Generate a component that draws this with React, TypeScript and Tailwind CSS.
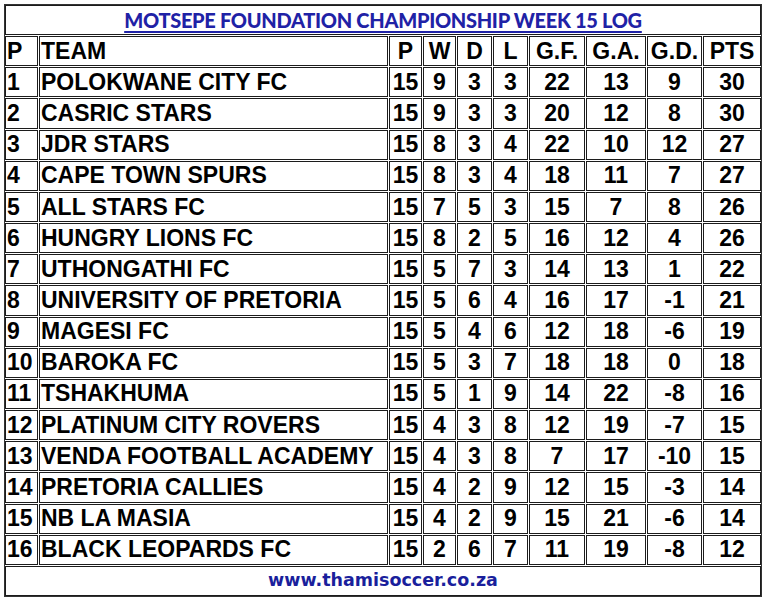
import React from "react";

type Row = [number, string, number, number, number, number, number, number, number, number];

const rows: Row[] = [
    [1, "POLOKWANE CITY FC", 15, 9, 3, 3, 22, 13, 9, 30],
    [2, "CASRIC STARS", 15, 9, 3, 3, 20, 12, 8, 30],
    [3, "JDR STARS", 15, 8, 3, 4, 22, 10, 12, 27],
    [4, "CAPE TOWN SPURS", 15, 8, 3, 4, 18, 11, 7, 27],
    [5, "ALL STARS FC", 15, 7, 5, 3, 15, 7, 8, 26],
    [6, "HUNGRY LIONS FC", 15, 8, 2, 5, 16, 12, 4, 26],
    [7, "UTHONGATHI FC", 15, 5, 7, 3, 14, 13, 1, 22],
    [8, "UNIVERSITY OF PRETORIA", 15, 5, 6, 4, 16, 17, -1, 21],
    [9, "MAGESI FC", 15, 5, 4, 6, 12, 18, -6, 19],
    [10, "BAROKA FC", 15, 5, 3, 7, 18, 18, 0, 18],
    [11, "TSHAKHUMA", 15, 5, 1, 9, 14, 22, -8, 16],
    [12, "PLATINUM CITY ROVERS", 15, 4, 3, 8, 12, 19, -7, 15],
    [13, "VENDA FOOTBALL ACADEMY", 15, 4, 3, 8, 7, 17, -10, 15],
    [14, "PRETORIA CALLIES", 15, 4, 2, 9, 12, 15, -3, 14],
    [15, "NB LA MASIA", 15, 4, 2, 9, 15, 21, -6, 14],
    [16, "BLACK LEOPARDS FC", 15, 2, 6, 7, 11, 19, -8, 12],
];

const headers = ["P", "TEAM", "P", "W", "D", "L", "G.F.", "G.A.", "G.D.", "PTS"];

const cell = "border border-[#1c1c1c] flex items-center leading-none";

export default function App() {
    return (
        <main className="w-[766px] h-[601px] bg-white p-[4px]">
            <div
                className="grid w-[758px] h-[593px] gap-[1px] border border-[#333] bg-white text-black font-bold text-[23px] grid-cols-[33px_349px_33px_33px_35px_35px_56px_60px_55px_58px] grid-rows-[repeat(19,minmax(0,1fr))]"
                style={{ fontFamily: '"Liberation Sans", Arial, sans-serif' }}
            >
                {/* titulo */}
                <div className={`${cell} col-span-10 justify-center`}>
                    <span
                        className="text-[#1f22a6] text-[20px] font-black underline underline-offset-[3px] decoration-[2px] tracking-[-0.3px]"
                        style={{ fontFamily: "Lato, sans-serif" }}
                    >
                        MOTSEPE FOUNDATION CHAMPIONSHIP WEEK 15 LOG
                    </span>
                </div>

                {/* cabecalho */}
                {headers.map((h, i) => (
                    <div
                        key={"h" + i}
                        className={`${cell} ${i < 2 ? "justify-start pl-[1px]" : "justify-center"}`}
                    >
                        {h}
                    </div>
                ))}

                {rows.map((r) =>
                    r.map((v, i) => (
                        <div
                            key={r[0] + "-" + i}
                            className={`${cell} ${i < 2 ? "justify-start pl-[1px]" : "justify-center"}`}
                        >
                            {v}
                        </div>
                    ))
                )}

                {/* rodape */}
                <div className={`${cell} col-span-10 justify-center`}>
                    <span
                        className="text-[#1a1f9c] text-[17.5px]"
                        style={{ fontFamily: '"DejaVu Sans", Verdana, sans-serif' }}
                    >
                        www.thamisoccer.co.za
                    </span>
                </div>
            </div>
        </main>
    );
}
